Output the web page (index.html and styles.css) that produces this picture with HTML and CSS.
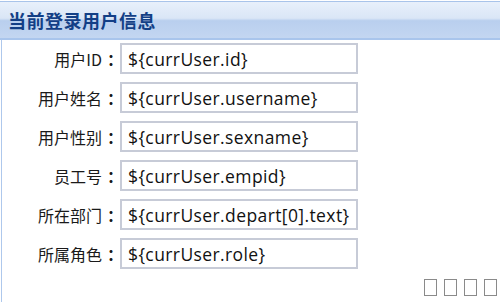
FILE: index.html
```html
<!DOCTYPE html>
<html lang="zh">
<head>
<meta charset="utf-8">
<title>当前登录用户信息</title>
<link rel="stylesheet" href="styles.css">
</head>
<body>
<div class="panel">
  <div class="header"><h1 class="title">当前登录用户信息</h1></div>
  <div class="body">
    <div class="form">
      <label class="label">用户ID<span class="colon">：</span></label><input class="field" type="text" value="${currUser.id}">
      <label class="label">用户姓名<span class="colon">：</span></label><input class="field" type="text" value="${currUser.username}">
      <label class="label">用户性别<span class="colon">：</span></label><input class="field" type="text" value="${currUser.sexname}">
      <label class="label">员工号<span class="colon">：</span></label><input class="field" type="text" value="${currUser.empid}">
      <label class="label">所在部门<span class="colon">：</span></label><input class="field" type="text" value="${currUser.depart[0].text}">
      <label class="label">所属角色<span class="colon">：</span></label><input class="field" type="text" value="${currUser.role}">
    </div>
    <div class="footer"><span class="tofu"></span><span class="tofu"></span><span class="tofu"></span><span class="tofu"></span></div>
  </div>
</div>
</body>
</html>
```
FILE: styles.css
```css
html, body {
  margin: 0;
  padding: 0;
  background: #ffffff;
}
body {
  width: 500px;
  height: 302px;
  overflow: hidden;
  font-family: "Noto Sans CJK SC", "Noto Sans", sans-serif;
}
.panel {
  display: flex;
  flex-direction: column;
  height: 302px;
}
.header {
  margin-top: 1px;
  height: 36px;
  border-top: 1px solid #a9c4ea;
  border-bottom: 2px solid #a9c5ec;
  background: linear-gradient(#e8f0fb 0%, #dae6f6 45%, #b9cfee 52%, #c3d6f1 100%);
  display: flex;
  align-items: center;
  padding-left: 8px;
}
.title {
  margin: 0;
  font-size: 18px;
  letter-spacing: 0.5px;
  font-weight: bold;
  color: #133f86;
  line-height: 1;
}
.body {
  flex: 1;
  margin-left: 1px;
  border-left: 1px solid #aec8ec;
  display: flex;
  flex-direction: column;
}
.form {
  display: grid;
  grid-template-columns: 116px 238px;
  column-gap: 2px;
  row-gap: 8px;
  align-items: center;
  padding-top: 3px;
}
.label {
  text-align: right;
  font-size: 16px;
  color: #1a1a1a;
  line-height: 20px;
}
.colon {
  font-weight: bold;
  margin-left: 5px;
  margin-right: -5px;
}
.field {
  box-sizing: border-box;
  height: 31px;
  margin: 0;
  padding: 0 0 0 6px;
  border: 2px solid #c7cbd7;
  font-family: "Open Sans", "Noto Sans", sans-serif;
  font-size: 17.5px;
  letter-spacing: 0.4px;
  color: #111;
  background: #fff;
  outline: none;
}
.footer {
  margin-top: auto;
  display: flex;
  justify-content: flex-end;
  gap: 7px;
  padding: 0 3px 6px 0;
}
.tofu {
  display: inline-block;
  width: 11px;
  height: 15px;
  border: 1px solid #8a8a8a;
}
```
